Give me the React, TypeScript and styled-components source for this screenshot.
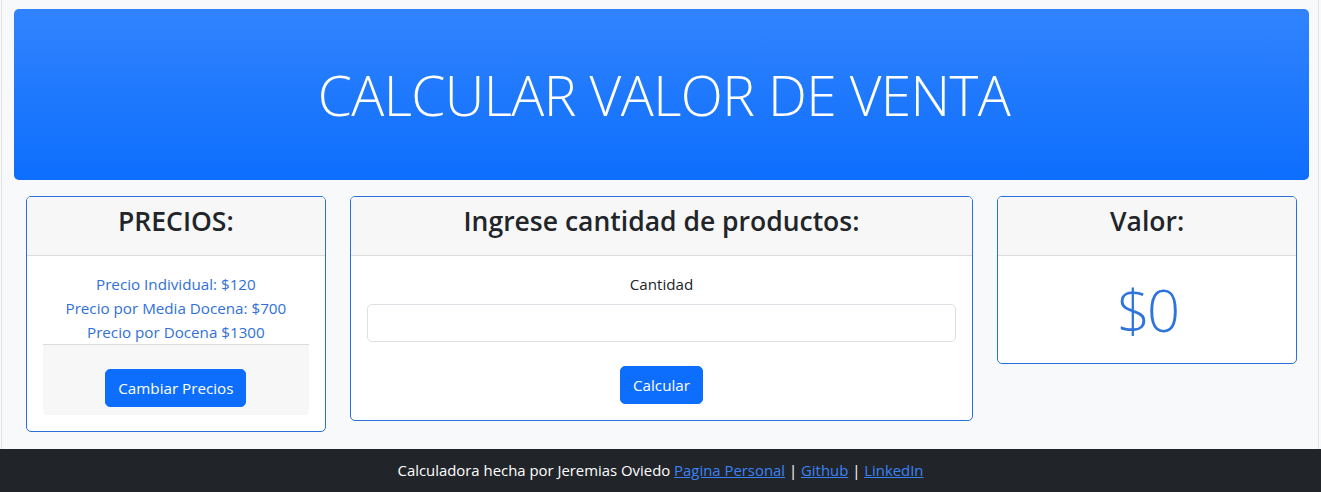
import React from "react";
import styled, { createGlobalStyle } from "styled-components";

const GlobalStyle = createGlobalStyle`
  *, *::before, *::after { box-sizing: border-box; }
  body {
    margin: 0;
    background: #f8f9fa;
    color: #212529;
    font-family: "Open Sans", "Noto Sans", sans-serif;
    font-size: 15.2px;
    line-height: 24px;
  }
`;

const Page = styled.div`
  display: flex;
  flex-direction: column;
  min-height: 492px;
  border-left: 1px solid #e3e5e8;
  border-right: 1px solid #e3e5e8;
  margin-left: 1px;
  width: 1318px;
`;

const Main = styled.main`
  padding: 9px 9px 0 12px;
`;

const Hero = styled.header`
  height: 171px;
  border-radius: 5px;
  background-color: #0d6efd;
  background-image: linear-gradient(180deg, rgba(255, 255, 255, 0.15), rgba(255, 255, 255, 0));
  display: flex;
  align-items: center;
  justify-content: center;
`;

const HeroTitle = styled.h1`
  margin: 0 0 0 5px;
  color: #fff;
  font-weight: 300;
  font-size: 55px;
  letter-spacing: -0.6px;
  line-height: 66px;
`;

const Columns = styled.div`
  display: grid;
  grid-template-columns: 1fr 2fr 1fr;
  align-items: start;
  margin-top: 16px;
`;

const Col = styled.div`
  padding: 0 12px;
`;

const Card = styled.section`
  background: #fff;
  border: 1px solid #2a70da;
  border-radius: 5px;
  overflow: hidden;
`;

const CardHeader = styled.div`
  background: #f7f7f7;
  border-bottom: 1px solid #dcdcdc;
  padding: 8px 16px;
  text-align: center;
`;

const CardTitle = styled.h3`
  margin: 0 0 8px;
  font-size: 26.5px;
  font-weight: 600;
  line-height: 33.6px;
  color: #212529;
`;

const CardBody = styled.div`
  padding: 16px;
  text-align: center;
`;

const PriceLine = styled.p`
  margin: 0;
  color: #3170d8;
`;

const InnerFooter = styled.div`
  background: #f7f7f7;
  border-top: 1px solid #dcdcdc;
  padding: 8px 16px;
  border-radius: 0 0 4px 4px;
`;

const Button = styled.button<{ $mt: number }>`
  margin-top: ${(p) => p.$mt}px;
  background: #0d6efd;
  color: #fff;
  border: 1px solid #0d6efd;
  border-radius: 5px;
  padding: 6px 12px;
  font-family: inherit;
  font-size: 15.2px;
  line-height: 24px;
  cursor: pointer;
`;

const Label = styled.label`
  display: block;
  margin-bottom: 8px;
`;

const Input = styled.input`
  display: block;
  width: 100%;
  height: 38px;
  border: 1px solid #dcdfe3;
  border-radius: 5px;
  padding: 6px 12px;
  font-family: inherit;
  font-size: 15.2px;
  background: #fff;
`;

const Amount = styled.div`
  font-size: 58px;
  font-weight: 300;
  line-height: 75px;
  letter-spacing: -3px;
  color: #2f74dc;
`;

const Footer = styled.footer`
  margin-top: 17px;
  background: #212529;
  color: #fff;
  text-align: center;
  padding: 10px 0;
  line-height: 23px;
  font-size: 14.9px;
  margin-left: -2px;
  width: 1321px;
`;

const FooterLink = styled.a`
  color: #3b82f6;
  text-decoration: underline;
`;

export default function App() {
  return (
    <>
      <GlobalStyle />
      <Page>
        <Main>
          <Hero>
            <HeroTitle>CALCULAR VALOR DE VENTA</HeroTitle>
          </Hero>
          <Columns>
            <Col>
              <Card>
                <CardHeader>
                  <CardTitle>PRECIOS:</CardTitle>
                </CardHeader>
                <CardBody>
                  <PriceLine>Precio Individual: $120</PriceLine>
                  <PriceLine>Precio por Media Docena: $700</PriceLine>
                  <PriceLine>Precio por Docena $1300</PriceLine>
                  <InnerFooter>
                    <Button $mt={16}>Cambiar Precios</Button>
                  </InnerFooter>
                </CardBody>
              </Card>
            </Col>
            <Col>
              <Card>
                <CardHeader>
                  <CardTitle>Ingrese cantidad de productos:</CardTitle>
                </CardHeader>
                <CardBody>
                  <Label htmlFor="cantidad">Cantidad</Label>
                  <Input id="cantidad" type="number" />
                  <Button $mt={24}>Calcular</Button>
                </CardBody>
              </Card>
            </Col>
            <Col>
              <Card>
                <CardHeader>
                  <CardTitle>Valor:</CardTitle>
                </CardHeader>
                <CardBody>
                  <Amount>$0</Amount>
                </CardBody>
              </Card>
            </Col>
          </Columns>
        </Main>
        <Footer>
          Calculadora hecha por Jeremias Oviedo <FooterLink href="#">Pagina Personal</FooterLink> |{" "}
          <FooterLink href="#">Github</FooterLink> | <FooterLink href="#">LinkedIn</FooterLink>
        </Footer>
      </Page>
    </>
  );
}
